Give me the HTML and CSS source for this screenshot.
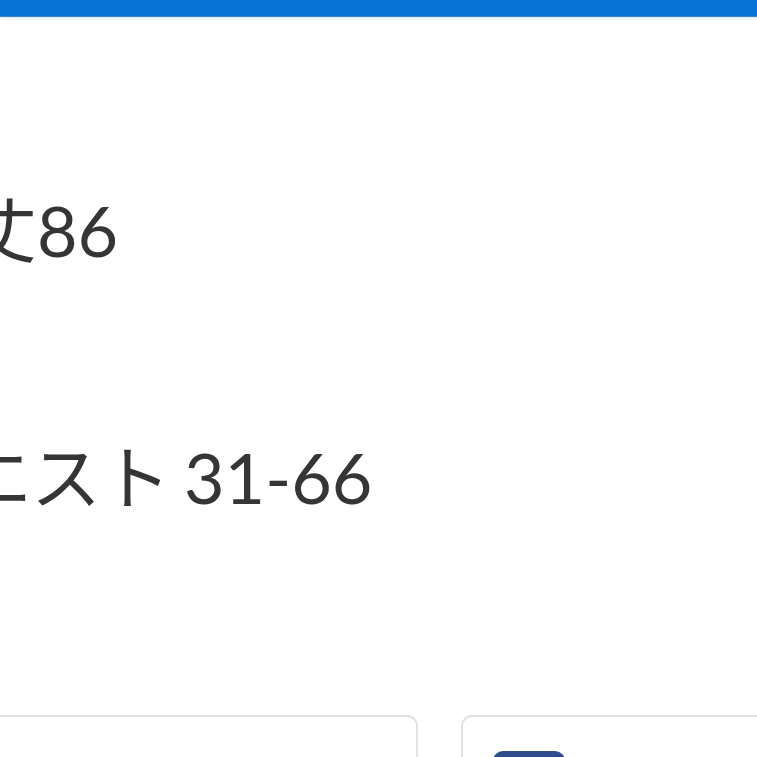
FILE: index.html
```html
<!DOCTYPE html>
<html lang="ja">
<head>
<meta charset="utf-8">
<title>サイズ</title>
<link rel="stylesheet" href="styles.css">
</head>
<body>
<div class="topbar"></div>
<main class="content">
  <ul class="specs">
    <li class="spec">着丈<span class="num">86</span></li>
    <li class="spec spec-wide">ウエスト<span class="num num-wide">31-66</span></li>
  </ul>
  <div class="options">
    <div class="option"></div>
    <div class="option">
      <span class="badge"></span>
    </div>
  </div>
</main>
</body>
</html>
```
FILE: styles.css
```css
html, body {
  margin: 0;
  padding: 0;
  background: #ffffff;
  overflow: hidden;
  width: 757px;
  height: 757px;
}
body {
  font-family: Lato, "Noto Sans CJK JP", sans-serif;
  color: #353535;
}
.topbar {
  height: 16px;
  background: #0872d5;
  box-shadow: 0 1px 0 #3f7fd0, 0 2px 4px rgba(60, 140, 230, 0.25);
}
.content {
  margin-left: -103px;
  width: 1100px;
}
.specs {
  list-style: none;
  margin: 0;
  padding: 179px 0 0 0;
  display: flex;
  flex-direction: column;
  gap: 177px;
}
.spec {
  font-size: 70px;
  line-height: 70px;
  height: 70px;
  white-space: nowrap;
}
.spec-wide {
  margin-left: -6px;
}
.num-wide {
  margin-left: 13px;
}
.options {
  margin-top: 203px;
  display: grid;
  grid-template-columns: 521px 521px;
  gap: 43px;
}
.option {
  height: 120px;
  border: 2px solid #e2e2e2;
  border-radius: 11px;
  box-sizing: border-box;
  padding: 34px 0 0 30px;
}
.badge {
  display: block;
  width: 72px;
  height: 60px;
  background: #2e4b8e;
  border-radius: 10px;
}
```
